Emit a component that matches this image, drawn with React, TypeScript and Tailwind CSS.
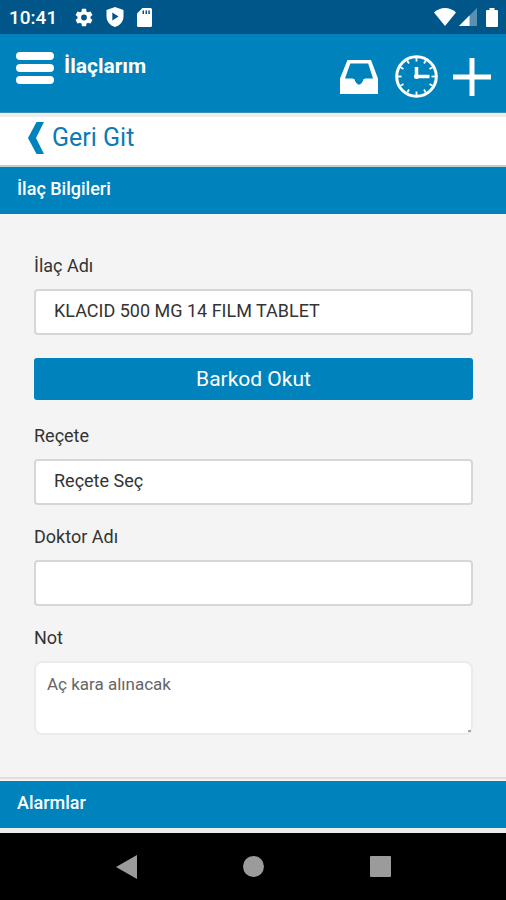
import { useState } from "react";

const inputClass =
  "mt-[11px] block h-[46px] w-full appearance-none rounded-[4px] border-2 border-[#d6d6d6] bg-white px-[18px] pb-[3px] text-lg text-[#333] outline-none";
const labelClass = "block text-lg leading-6 text-[#333]";

function StatusBar() {
  return (
    <div className="flex h-[34px] items-center bg-[#005689] pr-[8px] pl-[9px] text-white">
      <span className="pt-[2px] text-[19px] font-medium">10:41</span>
      <div className="ml-[18px] flex items-center gap-[13px]">
        <svg className="h-[19px] w-[18px]" viewBox="2 2 20 20" fill="currentColor">
          <path d="M19.14 12.94c.04-.3.06-.61.06-.94 0-.32-.02-.64-.07-.94l2.03-1.58a.49.49 0 0 0 .12-.61l-1.92-3.32a.49.49 0 0 0-.59-.22l-2.39.96c-.5-.38-1.03-.7-1.62-.94l-.36-2.54a.48.48 0 0 0-.48-.41h-3.84c-.24 0-.43.17-.47.41l-.36 2.54c-.59.24-1.13.57-1.62.94l-2.39-.96a.48.48 0 0 0-.59.22L2.74 8.87c-.12.21-.08.47.12.61l2.03 1.58c-.05.3-.09.63-.09.94s.02.64.07.94l-2.03 1.58a.49.49 0 0 0-.12.61l1.92 3.32c.12.22.37.29.59.22l2.39-.96c.5.38 1.03.7 1.62.94l.36 2.54c.05.24.24.41.48.41h3.84c.24 0 .44-.17.47-.41l.36-2.54c.59-.24 1.13-.56 1.62-.94l2.39.96c.22.08.47 0 .59-.22l1.92-3.32a.49.49 0 0 0-.12-.61l-2.01-1.58zM12 15.2a3.2 3.2 0 1 1 0-6.4 3.2 3.2 0 0 1 0 6.4z" />
        </svg>
        <svg className="h-[20px] w-[18px]" viewBox="0 0 18 20" fill="currentColor">
          <path d="M9 0l8.500 3v6.500c0 5-3.400 9-8.500 10.500C3.900 18.500.5 14.500.5 9.500V3z" />
          <path d="M6.300 5.500v8l6.200-4z" fill="#005689" />
        </svg>
        <svg className="h-[19px] w-[15px]" viewBox="0 0 15 19" fill="currentColor">
          <path d="M5.500 0H13.500A1.500 1.500 0 0 1 15 1.500v16a1.500 1.500 0 0 1-1.500 1.500h-12A1.500 1.500 0 0 1 0 17.500V5.500z" />
          <path d="M5.500 2.500h1.500v3.500h-1.500zM8.500 2.500h1.500v3.500h-1.500zM11.300 2.500h1.500v3.500h-1.500z" fill="#005689" />
        </svg>
      </div>
      <div className="ml-auto flex items-center">
        <svg className="h-[18px] w-[22px]" viewBox="0 0 22 18" fill="currentColor">
          <path d="M11 18L0 4.500C3 1.500 7 0 11 0s8 1.500 11 4.500z" />
        </svg>
        <svg className="ml-[3px] h-[18px] w-[18px]" viewBox="0 0 18 18" fill="currentColor">
          <path d="M18 0v18H0z" opacity=".35" />
          <path d="M10.500 7.500v10.500H0z" />
        </svg>
        <svg className="ml-[9px] h-[19px] w-[12px]" viewBox="0 0 12 19" fill="currentColor">
          <path d="M3.500 0h5v2H11a1 1 0 0 1 1 1v15a1 1 0 0 1-1 1H1a1 1 0 0 1-1-1V3a1 1 0 0 1 1-1h2.500z" />
        </svg>
      </div>
    </div>
  );
}

function Header() {
  return (
    <header className="flex h-[79px] items-start border-b border-[#3f8fb5] bg-[#0082bc] pr-[15px] pl-4 text-white">
      <button aria-label="Menü" className="mt-[18px] flex w-[38px] flex-col gap-1">
        <span className="h-2 w-full rounded-full bg-white" />
        <span className="h-2 w-full rounded-full bg-white" />
        <span className="h-2 w-full rounded-full bg-white" />
      </button>
      <h1 className="mt-[18px] ml-[10px] text-[21px] leading-7 font-bold">İlaçlarım</h1>
      <div className="mt-[21px] ml-auto flex items-center">
        <button aria-label="Gelen kutusu">
          <svg className="h-[34px] w-[38px]" viewBox="0 0 38 34" fill="currentColor">
            <path
              fillRule="evenodd"
              d="M7.500 0h23.500L38 18.500V34H0V18.500zM10.300 3.500L5 18.500h7.500l2 .8 1.200 3 2.300 2.200h2l2.300-2.200 1.200-3 2-.8H33L28.200 3.500z"
            />
          </svg>
        </button>
        <button aria-label="Saat" className="ml-[17px]">
          <svg className="h-[43px] w-[43px]" viewBox="0 0 43 43" fill="none" stroke="currentColor">
            <circle cx="21.500" cy="21.500" r="19.800" strokeWidth="3" />
            {[0, 30, 60, 90, 120, 150, 180, 210, 240, 270, 300, 330].map((deg) => (
              <path key={deg} d="M21.500 3v3.500" strokeWidth="1.800" transform={`rotate(${deg} 21.500 21.500)`} />
            ))}
            <path d="M21.500 12v9.500H34.500" strokeWidth="3.500" />
            <circle cx="21.500" cy="21.500" r="2.500" fill="currentColor" stroke="none" />
          </svg>
        </button>
        <button aria-label="Ekle" className="ml-[15px]">
          <svg className="h-[38px] w-[38px]" viewBox="0 0 38 38" stroke="currentColor" strokeWidth="5">
            <path d="M19 0v38M0 19h38" />
          </svg>
        </button>
      </div>
    </header>
  );
}

function SectionTitle({ children }: { children: string }) {
  return (
    <h2 className="h-[47px] bg-[#0082bc] px-[17px] pt-[10px] text-lg leading-6 font-medium text-white">
      {children}
    </h2>
  );
}

export default function App() {
  const [name, setName] = useState("KLACID 500 MG 14 FILM TABLET");
  const [doctor, setDoctor] = useState("");

  return (
    <div className="flex min-h-screen flex-col bg-[#f4f4f4] font-[Roboto,sans-serif]">
      <StatusBar />
      <Header />
      <div className="h-[54px] border-t-4 border-b-2 border-t-[#ececec] border-b-[#c4cdd2] bg-white">
        <a href="#" className="flex w-fit items-center pt-[4px] pl-[28px] text-[25px] leading-[34px] text-[#0c7ab5]">
          <svg className="h-[32px] w-[16px]" viewBox="0 0 16 32" fill="#0082bc">
            <path d="M8.500 0H16L8 16l8 16H8.500L0 16z" />
          </svg>
          <span className="ml-[8px]">Geri Git</span>
        </a>
      </div>

      <SectionTitle>İlaç Bilgileri</SectionTitle>
      <form className="pt-10 pr-[33px] pb-[42px] pl-[34px]" onSubmit={(e) => e.preventDefault()}>
        <label htmlFor="ilac" className={labelClass}>
          İlaç Adı
        </label>
        <input id="ilac" className={inputClass} value={name} onChange={(e) => setName(e.target.value)} />
        <button
          type="button"
          className="mt-[23px] block h-[42px] w-full rounded-[3px] bg-[#0082bc] text-[21px] leading-7 text-white"
        >
          Barkod Okut
        </button>

        <label htmlFor="recete" className={`mt-6 ${labelClass}`}>
          Reçete
        </label>
        <select id="recete" className={inputClass}>
          <option>Reçete Seç</option>
        </select>

        <label htmlFor="doktor" className={`mt-5 ${labelClass}`}>
          Doktor Adı
        </label>
        <input id="doktor" className={inputClass} value={doctor} onChange={(e) => setDoctor(e.target.value)} />

        <label htmlFor="not" className={`mt-5 ${labelClass}`}>
          Not
        </label>
        <div className="relative mt-[11px]">
          <textarea
            id="not"
            className="block h-[74px] w-full resize-none rounded-[8px] border-2 border-[#ebebeb] bg-white px-[11px] pt-[9px] text-[17px] leading-6 text-[#666] outline-none"
            defaultValue="Aç kara alınacak"
          />
          {/* resize grip */}
          <span className="absolute right-[2px] bottom-[3px] h-[2px] w-[3px] bg-[#a5a5a5]" />
        </div>
      </form>

      <div className="border-t-2 border-b-[5px] border-t-[#e2dcde] border-b-[#ececec] pt-[2px]">
        <SectionTitle>Alarmlar</SectionTitle>
      </div>

      <nav className="mt-auto flex h-[67px] items-center justify-center gap-[106px] bg-black text-[#9b9b9b]">
        <button aria-label="Geri">
          <svg className="h-[24px] w-[21px]" viewBox="0 0 21 24" fill="currentColor">
            <path d="M21 0v24L0 12z" />
          </svg>
        </button>
        <button aria-label="Ana ekran" className="h-[21px] w-[21px] rounded-full bg-[#9b9b9b]" />
        <button aria-label="Son uygulamalar" className="h-[21px] w-[21px] rounded-[1px] bg-[#9b9b9b]" />
      </nav>
    </div>
  );
}
